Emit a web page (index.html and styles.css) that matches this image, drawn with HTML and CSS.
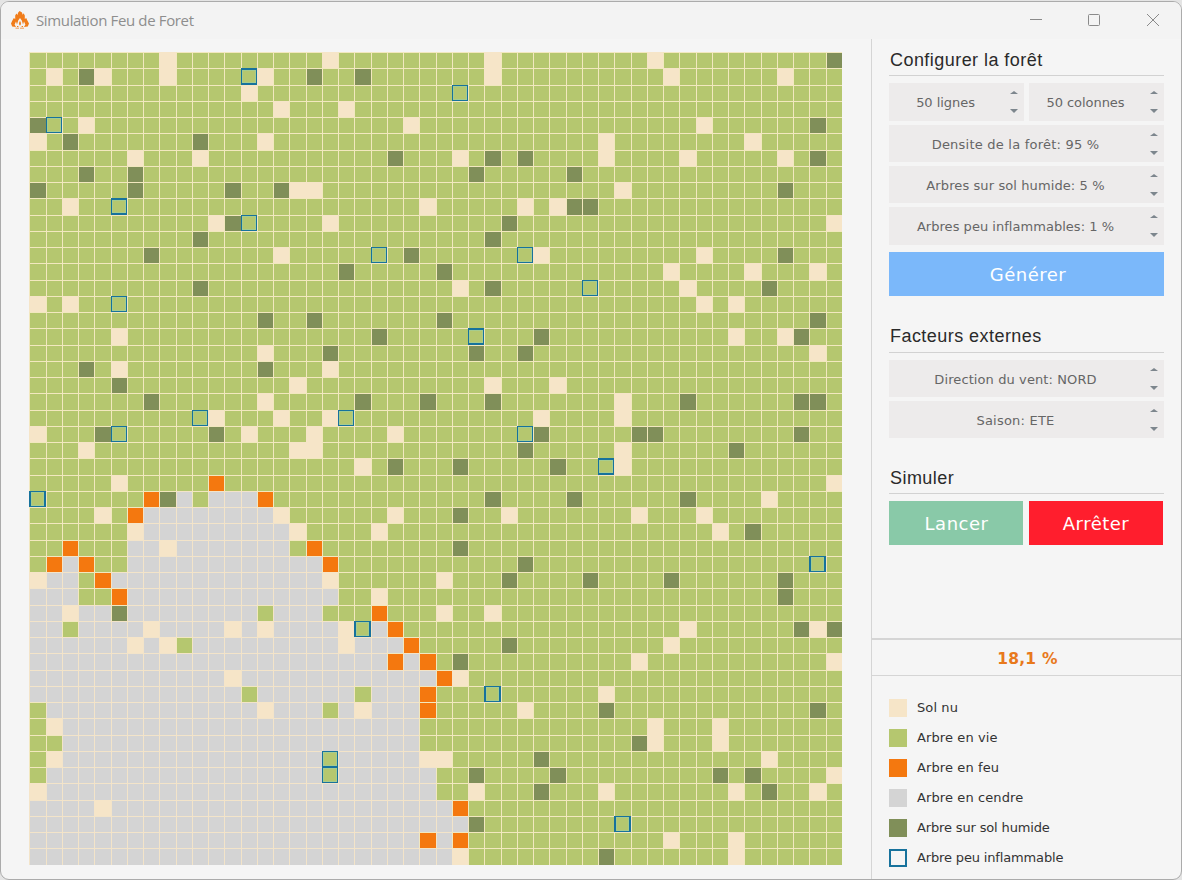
FILE: index.html
```html
<!DOCTYPE html>
<html lang="fr">
<head>
<meta charset="utf-8">
<title>Simulation Feu de Foret</title>
<link rel="stylesheet" href="styles.css">
</head>
<body>
<div class="window">
  <header class="titlebar">
    <svg class="app-icon" width="18" height="18" viewBox="0 0 18 18">
      <path fill="#f07c1a" d="M8.6 0 L11 1.6 L11.6 3.8 L12.6 2.2 L13.8 4.5 L13.8 8 L15.2 7 L16.4 9.5 L18 12.5 L16.8 15.6 L13 16 L14.4 13.4 L13 10.6 L12 13.4 L10.8 9.4 L9 7 L7.2 9.4 L6 13.4 L5 10.6 L3.6 13.4 L5 16 L1.2 15.6 L0 12.5 L1.4 9.5 L2.8 7 L4.2 8 L4.2 4.5 L5.4 2.6 L6.4 4 L7.2 1.6 Z"/>
      <path fill="#f07c1a" d="M9 9.8 L10 12 L9.6 14.2 L8.4 14.2 L8 12 Z M4.5 16.8 H8 V17.6 H4.5 Z M9 16.8 H13 V17.6 H9 Z M6 15 H7.4 V16 H6 Z M10.6 15 H12 V16 H10.6 Z"/>
    </svg>
    <span class="app-title">Simulation Feu de Foret</span>
    <svg class="controls" width="132" height="14" viewBox="0 0 132 14" fill="none" stroke="#8a8a8a">
      <path d="M0 6.5 H12"/>
      <rect x="58.5" y="1.5" width="11" height="11" rx="1"/>
      <path d="M117 1 L129 13 M129 1 L117 13"/>
    </svg>
  </header>
  <div class="content">
    <main class="stage"><div class="forest" id="forest"></div></main>
    <aside class="sidebar">
      <section class="panel configure">
        <h2>Configurer la forêt</h2>
        <div class="fields">
          <div class="pair">
            <div class="spin short"><span>50 lignes</span><i class="arrows"></i></div>
            <div class="spin short"><span>50 colonnes</span><i class="arrows"></i></div>
          </div>
          <div class="spin"><span class="loose">Densite de la forêt: 95 %</span><i class="arrows"></i></div>
          <div class="spin"><span>Arbres sur sol humide: 5 %</span><i class="arrows"></i></div>
          <div class="spin tall"><span class="tight">Arbres peu inflammables: 1 %</span><i class="arrows"></i></div>
        </div>
        <button class="btn generate">Générer</button>
      </section>
      <section class="panel factors">
        <h2>Facteurs externes</h2>
        <div class="fields">
          <div class="spin"><span>Direction du vent: NORD</span><i class="arrows"></i></div>
          <div class="spin"><span class="loose">Saison: ETE</span><i class="arrows"></i></div>
        </div>
      </section>
      <section class="panel simulate">
        <h2>Simuler</h2>
        <div class="actions">
          <button class="btn start">Lancer</button>
          <button class="btn stop">Arrêter</button>
        </div>
      </section>
      <div class="percent">18,1 %</div>
      <ul class="legend">
        <li><i class="swatch bare"></i>Sol nu</li>
        <li><i class="swatch alive"></i>Arbre en vie</li>
        <li><i class="swatch fire"></i>Arbre en feu</li>
        <li><i class="swatch ash"></i>Arbre en cendre</li>
        <li class="tight"><i class="swatch humid"></i>Arbre sur sol humide</li>
        <li class="tight"><i class="swatch proof"></i>Arbre peu inflammable</li>
      </ul>
    </aside>
  </div>
</div>
<script src="forest.js"></script>
</body>
</html>
```
FILE: styles.css
```css
* { box-sizing: border-box; }
body { margin: 0; height: 880px; padding-top: 1px; background: #e4e4e4; overflow: hidden; }
.window {
  height: 879px; border: 1px solid #ababab; border-radius: 9px;
  background: #f5f5f5; overflow: hidden; display: flex; flex-direction: column;
}
.titlebar {
  height: 37px; flex: none; display: flex; align-items: center;
  background: #f3f3f3; padding: 0 19px 2px 10px;
}
.app-icon { flex: none; }
.app-title { margin-left: 7px; font: 15px "Open Sans", sans-serif; color: #8e8e8e; letter-spacing: -0.36px; flex: 1; }
.content { flex: 1; display: flex; min-height: 0; }
.stage { width: 870px; flex: none; padding: 13px 0 0 28px; }
.forest {
  display: grid; width: 813px; height: 813px;
  grid-template-columns: repeat(12, 17px 16px 16px 16px) 17px 16px;
  grid-template-rows: repeat(12, 16px 17px 16px 16px) 16px 17px;
}
.cell { border: solid #f2e8bf; border-width: 1px 0 0 1px; background: #b5c76f; }
.cell.bare { background: #f6e5c8; border-color: #f6e5c8; }
.cell.humid { background: #808f59; }
.cell.fire { background: #f4780f; }
.cell.ash { background: #d4d4d4; border-color: #f3e4c9; }
.cell.proof { border: 1px solid #17729c; box-shadow: inset 0 0 0 1px #a5cc90; }
.cell.proof.tall { border-top-width: 2px; border-bottom-width: 2px; }
.cell.proof.wide { border-left-width: 2px; border-right-width: 2px; }

.sidebar { flex: 1; border-left: 1px solid #d5d5d5; display: flex; flex-direction: column; min-width: 0; }
.panel { padding: 11px 17px 0; }
h2 {
  margin: 0 0 8px; height: 26px; border-bottom: 1px solid #d2d2d2; padding-left: 1px;
  font: 18px/20px "Liberation Sans", Arial, sans-serif; letter-spacing: 0.45px; color: #2a2a2a;
}
.configure h2 { margin-bottom: 7px; }
.fields { display: flex; flex-direction: column; gap: 4px; }
.pair { display: grid; grid-template-columns: 135px 135px; gap: 5px; }
.spin {
  height: 37px; background: #edebeb; display: flex; align-items: center; color: #666;
  font: 13px "DejaVu Sans", Verdana, sans-serif; letter-spacing: 0.1px;
}
.spin.short, .spin.tall { height: 38px; }
.spin span { flex: 1; text-align: center; white-space: nowrap; padding-top: 1px; }
.spin.short span { letter-spacing: -0.05px; padding-top: 0; }
.spin .loose { letter-spacing: 0.22px; }
.spin .tight { letter-spacing: 0.03px; }
.arrows {
  width: 8px; height: 22px; margin: 0 6px 0 8px; display: flex;
  flex-direction: column; justify-content: space-between;
}
.arrows::before, .arrows::after { content: ""; border: solid transparent; border-width: 0 4px; width: 0; }
.arrows::before { border-bottom: 3px solid #7d868d; }
.arrows::after { border-top: 4px solid #7d868d; }
.btn {
  border: 0; height: 44px; padding: 0; color: #fff;
  font: 18px "DejaVu Sans", Verdana, sans-serif; letter-spacing: 0.5px;
}
.generate { width: 100%; margin-top: 7px; padding-left: 3px; background: #7bb8fa; }
.factors { padding-top: 30px; }
.factors h2, .simulate h2 { height: 27px; margin-bottom: 7px; }
.simulate { padding-top: 29px; }
.simulate h2 { line-height: 22px; }
.actions { display: grid; grid-template-columns: 134px 134px; gap: 6px; }
.start { background: #89c9a8; padding-left: 1px; }
.stop { background: #ff1e2d; }
.percent {
  margin-top: auto; height: 38px; border: solid #d5d5d5; border-width: 2px 0 1px; padding-left: 2px;
  font: bold 15.5px/38px "DejaVu Sans", Verdana, sans-serif; letter-spacing: 0.2px; color: #e8791c; text-align: center;
}
.legend {
  list-style: none; margin: 0; padding: 17px 0 6px 17px;
  font: 13px/30px "DejaVu Sans", Verdana, sans-serif; color: #333; letter-spacing: 0.1px;
}
.legend li { display: flex; align-items: center; gap: 10px; }
.legend .tight { letter-spacing: -0.15px; }
.swatch { width: 18px; height: 18px; }
.swatch.bare { background: #f6e5c8; }
.swatch.alive { background: #b5c76f; }
.swatch.fire { background: #f4780f; }
.swatch.ash { background: #d4d4d4; }
.swatch.humid { background: #808f59; }
.swatch.proof { border: 2px solid #17729c; }
```
FILE: forest.js
```javascript
// One line per row: b = bare soil, h = humid, f = fire, a = ash, p = low flammability.
// Columns may be a single index or a range; everything else is a living tree.
const rows = `b8 b18 b28 b38 h49
b1 h3 b4 b8 p13 b14 h17 h20 b28 b39 b46
b13 p26
b15 b19
h0 p1 b3 b23 b41 h48
b0 h2 h10 b14 b35 b44
b6 b10 h22 b26 h28 h30 b35 b40 b46 h48
h3 h6 h27 h33
h0 h6 h12 h15 b16-17 b36 h46
b2 p5 b24 b30 b32 h33-34
b11 h12 p13 b18 h29 b49
h10 h28
h7 b15 p21 h23 p30 b31 b41 h46
h19 h25 b39 b44 b48
h10 b26 h28 p34 b40 h45
b0 b2 p5 b41 b43
h14 h17 h25 h48
b5 h21 p27 h31 b43 b46 h47
b14 h18 h27 h30 b48
h3 b5 h14 b18
h5 b16 b28 b32
h7 b14 h20 h24 h28 b36 h40 h47-48
p10 b11 b15 b18 p19 b31 b36
b0 h4 p5 h11 b13 b17 b22 p30 h31 h37-38 h47
b3 b16-17 h30 b36 h43
b20 h22 h26 h32 p35 b36
b5 f11 b49
p0 f7 h8 a9 a11-13 f14 h28 h33 h40 b45
b4 f6 a7-14 b15 b22 h26 b29 b37 b41
b6 a7-15 b16 b21 b42 h44
f2 a6-7 b8 a9-15 f17 h26
f1 a2 f3 a6-17 f18 h30 p48
b0 a1-2 f4 a5-17 b18 b25 h29 h34 h39 h46
a0-2 f5 a6-18 b21 h46
a0-1 b2 a3-4 h5 a6-13 a15-17 f21 b25 b28
a0-1 a3-6 b7 a8-11 b12 a13 b14 a15-18 b19 p20 a21 f22 b40 h47 b48 h49
a0-5 b6 a7 b8 a10-18 b19 a20-22 f23 h29 b39
a0-21 f22 a23 f24 h26 b37 b49
a0-11 b12 a13-24 f25 b26
a0-12 a14-19 a21-23 f24 p28 b35
a1-13 b14 a15-17 a19 b20 a21-23 f24 b30 h35 h48
b1 a2-23 b38 b42
a2-23 h37 b38 b42
b1 a2-17 p18 a19-23 b24-25 h31 b45
a1-17 p18 a19-24 h27 h32 h42 h44 b49
b0 a1-24 b27 h31 b35 b43 h45 b48
a0-3 b4 a5-25 f26
a0-26 h27 p36
a0-23 f24 a25 f26 b39 b43
a0-25 b26 h35 b43`.split("\n");

const names = { b: "bare", h: "humid", f: "fire", a: "ash", p: "proof" };
const forest = document.getElementById("forest");

rows.forEach((line, r) => {
  const kinds = Array(50).fill("");
  line.split(" ").forEach(token => {
    const [from, to = from] = token.slice(1).split("-").map(Number);
    for (let c = from; c <= to; c++) kinds[c] = names[token[0]];
  });
  kinds.forEach((kind, c) => {
    const cell = document.createElement("div");
    cell.className = "cell " + kind;
    if (r % 4 === 1) cell.classList.add("tall");
    if (c % 4 === 0) cell.classList.add("wide");
    forest.appendChild(cell);
  });
});
```
